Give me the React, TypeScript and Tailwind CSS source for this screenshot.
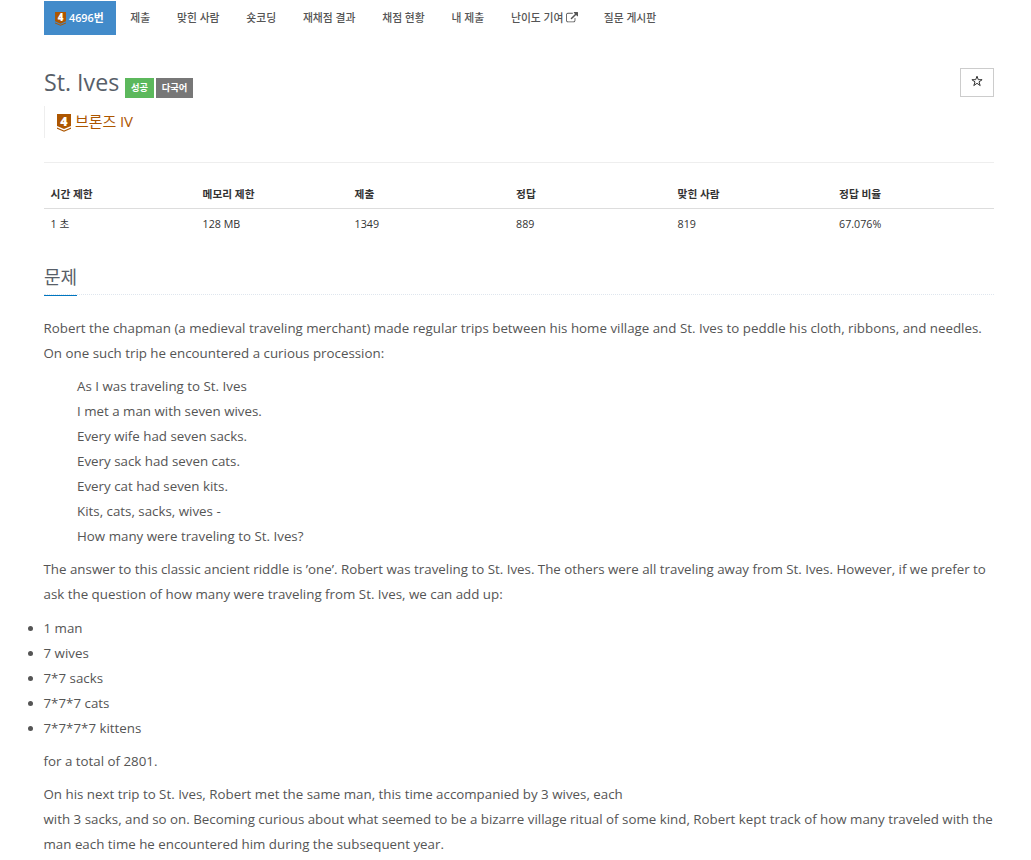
const TABS = ['제출', '맞힌 사람', '숏코딩', '재채점 결과', '채점 현황', '내 제출', '난이도 기여', '질문 게시판'];

const STATS = [
  { label: '시간 제한', value: '1 초', width: 'w-[152px]' },
  { label: '메모리 제한', value: '128 MB', width: 'w-[152px]' },
  { label: '제출', value: '1349', width: 'w-[161.5px]' },
  { label: '정답', value: '889', width: 'w-[161.5px]' },
  { label: '맞힌 사람', value: '819', width: 'w-[161.5px]' },
  { label: '정답 비율', value: '67.076%', width: 'w-[161.5px]' },
];

const ITEMS = ['1 man', '7 wives', '7*7 sacks', '7*7*7 cats', '7*7*7*7 kittens'];

function TierIcon({ className }: { className: string }) {
  return (
    <svg viewBox="0 0 14 18" className={className}>
      <path d="M0 0h14v12l-7 3-7-3z" fill="#ad5600" />
      <path d="M0 13.4l7 3 7-3v1.4l-7 3-7-3z" fill="#ad5600" />
      <text x="7" y="11.5" textAnchor="middle" fontSize="12.5" fontWeight="800" fill="#fff">4</text>
    </svg>
  );
}

function ExternalLinkIcon() {
  return (
    <svg viewBox="0 0 1792 1792" fill="currentColor" className="w-[12px] h-[12px] ml-[2.5px] -mr-px">
      <path d="M1408 928v320q0 119-84.5 203.5t-203.5 84.5h-832q-119 0-203.5-84.5t-84.5-203.5v-832q0-119 84.5-203.5t203.5-84.5h704q14 0 23 9t9 23v64q0 14-9 23t-23 9h-704q-66 0-113 47t-47 113v832q0 66 47 113t113 47h832q66 0 113-47t47-113v-320q0-14 9-23t23-9h64q14 0 23 9t9 23zm384-864v512q0 26-19 45t-45 19-45-19l-176-176-652 652q-10 10-23 10t-23-10l-114-114q-10-10-10-23t10-23l652-652-176-176q-19-19-19-45t19-45 45-19h512q26 0 45 19t19 45z" />
    </svg>
  );
}

export default function App() {
  return (
    <div className="w-[1031px] h-[860px] overflow-hidden bg-white pl-[44px] pr-[37px] font-['Open_Sans','Noto_Sans_CJK_KR',sans-serif] text-[#555]">
      <nav className="flex h-[34px] mt-px text-[10.8px] font-medium whitespace-nowrap">
        <a className="flex items-center w-[72px] pl-[11px] bg-[#428bca] text-white font-semibold">
          <TierIcon className="w-[11px] h-[14px] mr-[3px] mt-px" />
          4696번
        </a>
        <div className="flex items-center gap-[26.8px] ml-[14.3px]">
          {TABS.map((tab) => (
            <a key={tab} className="flex items-center">
              {tab}
              {tab === '난이도 기여' && <ExternalLinkIcon />}
            </a>
          ))}
        </div>
      </nav>

      <header className="flex justify-between mt-[33px] h-[37px]">
        <div className="flex">
          <h1 className="w-[75px] text-[23.2px] leading-[29px] text-[#585f69] whitespace-nowrap">St. Ives</h1>
          <span className="flex items-center justify-center w-[29px] h-5 mt-[10px] ml-[6px] bg-[#5cb85c] text-white text-[9.3px] font-bold">성공</span>
          <span className="flex items-center justify-center w-[37px] h-5 mt-[10px] ml-[2px] bg-[#777] text-white text-[9.3px] font-bold">다국어</span>
        </div>
        <button className="flex items-center justify-center w-[34px] h-[29px] border border-[#ccc] text-[#333]">
          <svg viewBox="0 0 12 12" className="w-3 h-3 mb-[3px] mr-px">
            <path d="M6 1.2l1.3 3.5h3.8L8 6.9l1.2 3.7L6 8.3l-3.2 2.3L4 6.9.9 4.7h3.8z" fill="none" stroke="currentColor" />
          </svg>
        </button>
      </header>

      <div className="flex items-center h-8 mt-px pl-3 border-l border-[#eee] text-[#ad5600] text-[15px]">
        <TierIcon className="w-[14px] h-[18px] mr-[4px] mt-[2px]" />
        <span className="mb-px tracking-[-0.1px]">브론즈 IV</span>
      </div>

      <hr className="mt-[24px] border-[#eee]" />

      <table className="w-[950px] mt-[17px] table-fixed text-[10.7px] leading-[17px] text-[#333] text-left">
        <thead>
          <tr className="h-[28px] border-b border-[#ddd]">
            {STATS.map((s) => <th key={s.label} className={`${s.width} pl-[6.6px] pt-[2px] font-bold`}>{s.label}</th>)}
          </tr>
        </thead>
        <tbody>
          <tr className="h-[30px]">
            {STATS.map((s) => <td key={s.label} className="pl-[6.6px] pt-[2px]">{s.value}</td>)}
          </tr>
        </tbody>
      </table>

      <div className="flex h-[32px] mt-[25px] border-b border-dotted border-[#dfe6ee]">
        <h2 className="h-[33px] pt-px border-b border-[#0076c0] text-[18px] leading-[26px] text-[#585f69]">문제</h2>
      </div>

      <section className="mt-[21px] -ml-[0.5px] text-[13.33px] leading-[25px] whitespace-nowrap">
        <p className="mb-2">
          Robert the chapman (a medieval traveling merchant) made regular trips between his home village and St. Ives to peddle his cloth, ribbons, and needles.<br />
          On one such trip he encountered a curious procession:
        </p>
        <p className="mb-2 pl-[33.5px]">
          As I was traveling to St. Ives<br />
          I met a man with seven wives.<br />
          Every wife had seven sacks.<br />
          Every sack had seven cats.<br />
          Every cat had seven kits.<br />
          Kits, cats, sacks, wives -<br />
          How many were traveling to St. Ives?
        </p>
        <p className="mb-[9px]">
          The answer to this classic ancient riddle is ’one’. Robert was traveling to St. Ives. The others were all traveling away from St. Ives. However, if we prefer to<br />
          ask the question of how many were traveling from St. Ives, we can add up:
        </p>
        <ul className="mb-2 -ml-4">
          {ITEMS.map((item) => (
            <li key={item} className="flex items-center">
              <span className="w-[5px] h-[5px] rounded-full bg-[#555] mr-[11px]" />
              {item}
            </li>
          ))}
        </ul>
        <p className="mb-2">for a total of 2801.</p>
        <p>
          On his next trip to St. Ives, Robert met the same man, this time accompanied by 3 wives, each<br />
          with 3 sacks, and so on. Becoming curious about what seemed to be a bizarre village ritual of some kind, Robert kept track of how many traveled with the<br />
          man each time he encountered him during the subsequent year.
        </p>
      </section>
    </div>
  );
}
